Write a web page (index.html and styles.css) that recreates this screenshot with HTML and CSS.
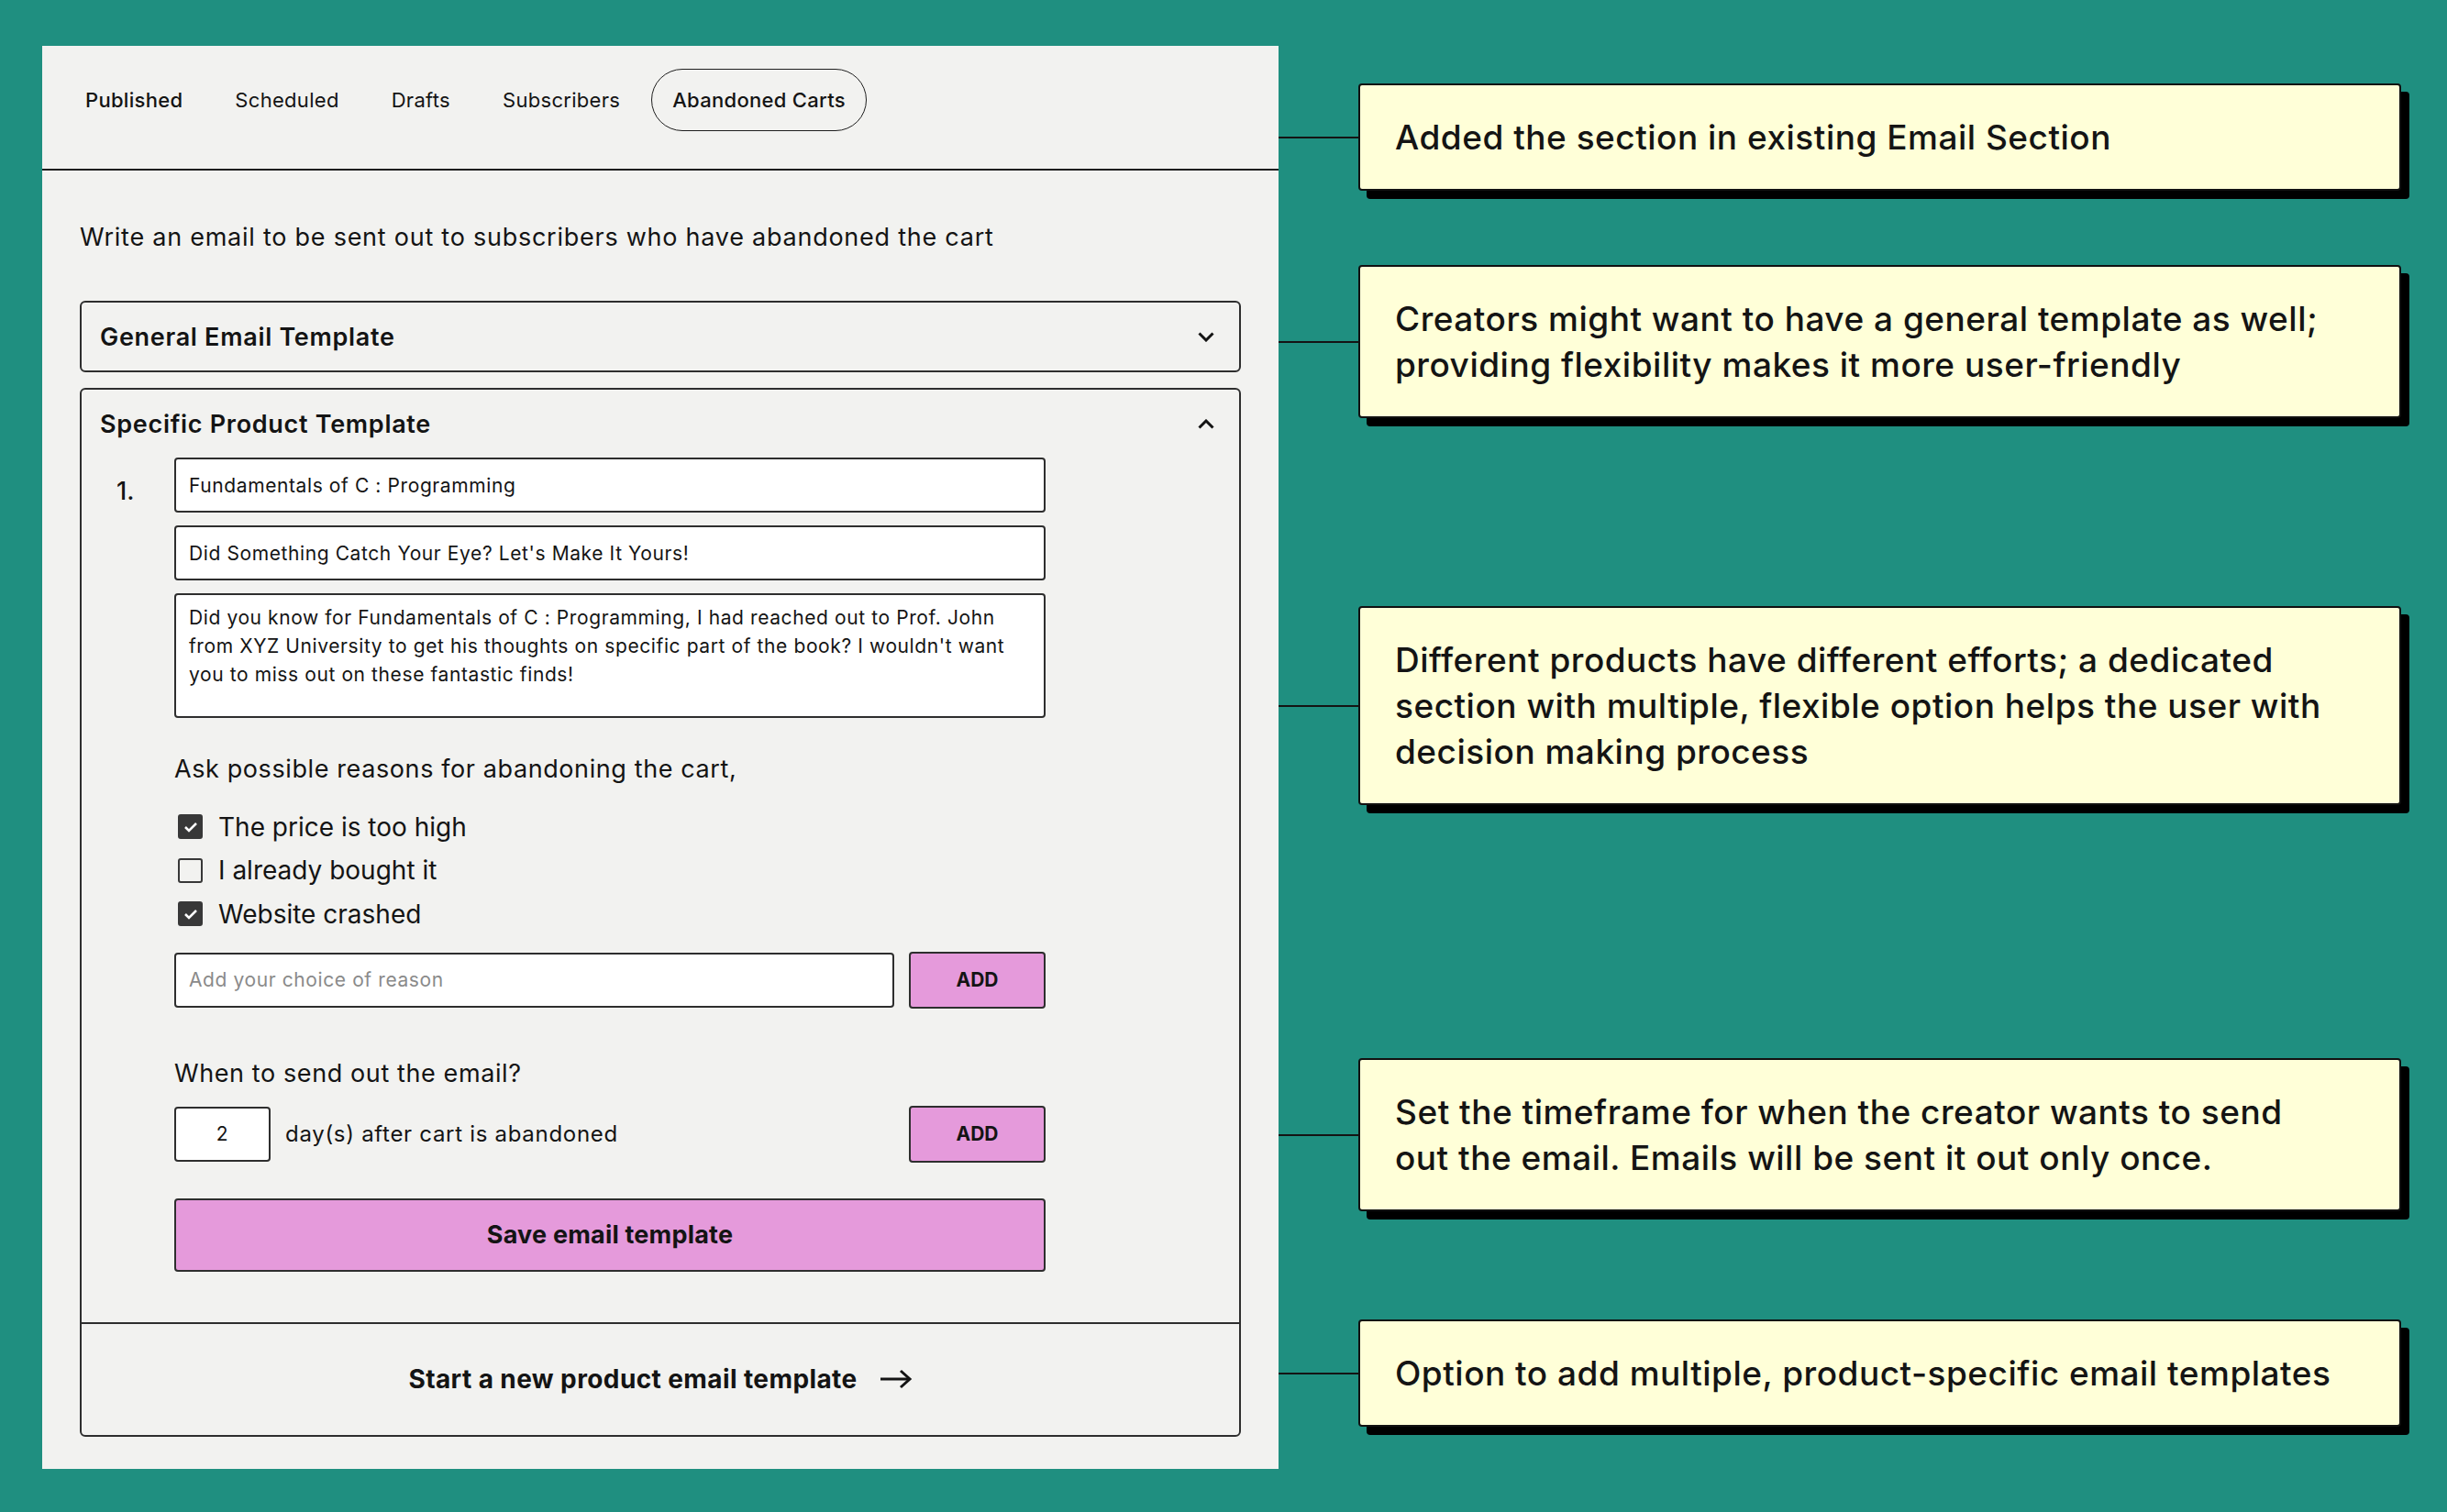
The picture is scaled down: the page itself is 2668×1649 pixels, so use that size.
FILE: index.html
```html
<!DOCTYPE html>
<html lang="en">

<head>
    <meta charset="UTF-8">
    <meta name="viewport" content="width=device-width, initial-scale=1.0">
    <title>Abandoned Carts</title>
    <link rel="stylesheet" href="styles.css">
</head>

<body>
    <div class="page">
        <div class="panel">
            <nav class="tabs">
                <a class="tab tab-first" href="#published">Published</a>
                <a class="tab" href="#scheduled">Scheduled</a>
                <a class="tab" href="#drafts">Drafts</a>
                <a class="tab" href="#subscribers">Subscribers</a>
                <a class="tab active" href="#abandoned">Abandoned Carts</a>
            </nav>
            <div class="panel-body">
                <p class="intro">Write an email to be sent out to subscribers who have abandoned the cart</p>

                <div class="accordion">
                    <div class="accordion-head">
                        <span>General Email Template</span>
                        <svg class="chevron" width="18" height="11" viewBox="0 0 18 11"><polyline points="1.5,1.5 9,9 16.5,1.5" /></svg>
                    </div>
                </div>

                <div class="accordion open">
                    <div class="accordion-head">
                        <span>Specific Product Template</span>
                        <svg class="chevron" width="18" height="11" viewBox="0 0 18 11"><polyline points="1.5,9.5 9,2 16.5,9.5" /></svg>
                    </div>
                    <div class="accordion-content">
                        <div class="item">
                            <span class="item-num">1.</span>
                            <div class="item-form">
                                <input class="field" type="text" value="Fundamentals of C : Programming">
                                <input class="field" type="text" value="Did Something Catch Your Eye? Let's Make It Yours!">
                                <div class="field field-area">Did you know for Fundamentals of C : Programming, I had reached out to Prof. John<br>from XYZ University to get his thoughts on specific part of the book? I wouldn't want<br>you to miss out on these fantastic finds!</div>

                                <p class="label">Ask possible reasons for abandoning the cart,</p>
                                <ul class="checks">
                                    <li><span class="check checked"><svg width="16" height="12" viewBox="0 0 16 12"><polyline points="2,6 6,10 14,2" /></svg></span>The price is too high</li>
                                    <li><span class="check"></span>I already bought it</li>
                                    <li><span class="check checked"><svg width="16" height="12" viewBox="0 0 16 12"><polyline points="2,6 6,10 14,2" /></svg></span>Website crashed</li>
                                </ul>
                                <div class="row">
                                    <input class="field field-grow" type="text" placeholder="Add your choice of reason">
                                    <button class="btn btn-add">ADD</button>
                                </div>

                                <p class="label label-when">When to send out the email?</p>
                                <div class="row">
                                    <input class="field field-days" type="text" value="2">
                                    <span class="days-text">day(s) after cart is abandoned</span>
                                    <button class="btn btn-add">ADD</button>
                                </div>

                                <button class="btn btn-save">Save email template</button>
                            </div>
                        </div>
                    </div>
                    <a class="accordion-foot" href="#new">
                        Start a new product email template
                        <svg class="arrow" width="36" height="22" viewBox="0 0 36 22"><line x1="1" y1="11" x2="33" y2="11" /><polyline points="23,2 33,11 23,20" /></svg>
                    </a>
                </div>
            </div>
        </div>

        <div class="notes">
            <div class="note note-1">
                <div class="note-box">Added the section in existing Email Section</div>
            </div>
            <div class="note note-2">
                <div class="note-box">Creators might want to have a general template as well;<br>providing flexibility makes it more user-friendly</div>
            </div>
            <div class="note note-3">
                <div class="note-box">Different products have different efforts; a dedicated<br>section with multiple, flexible option helps the user with<br>decision making process</div>
            </div>
            <div class="note note-4">
                <div class="note-box">Set the timeframe for when the creator wants to send<br>out the email. Emails will be sent it out only once.</div>
            </div>
            <div class="note note-5">
                <div class="note-box">Option to add multiple, product-specific email templates</div>
            </div>
        </div>
    </div>
</body>

</html>
```

FILE: styles.css
```css
body {
    margin: 0;
    background: #1f8f80;
    font-family: "Inter", "Liberation Sans", sans-serif;
    color: #141414;
}

.page {
    display: flex;
    align-items: flex-start;
    padding: 50px 0 0 46px;
}

/* left panel */

.panel {
    width: 1348px;
    background: #f2f2f0;
}

.tabs {
    display: flex;
    align-items: center;
    gap: 11px;
    padding: 25px 24px 41px;
    border-bottom: 2px solid #1e1e1e;
}

.tab {
    height: 68px;
    box-sizing: border-box;
    display: flex;
    align-items: center;
    padding: 0 22px;
    border: 1.5px solid transparent;
    border-radius: 34px;
    font-size: 22px;
    letter-spacing: 0.3px;
    color: #141414;
    text-decoration: none;
}

.tab-first,
.tab.active {
    font-weight: 500;
}

.tab.active {
    border-color: #1e1e1e;
}

.panel-body {
    padding: 55px 41px 35px;
}

.intro {
    margin: 0 0 51px;
    font-size: 27px;
    letter-spacing: 0.75px;
    line-height: 36px;
}

.accordion {
    border: 2px solid #2e2e2e;
    border-radius: 6px;
}

.accordion+.accordion {
    margin-top: 17px;
}

.accordion-head {
    height: 74px;
    display: flex;
    align-items: center;
    justify-content: space-between;
    padding: 0 27px 0 20px;
    font-size: 27px;
    letter-spacing: 0.7px;
    font-weight: 600;
}

.chevron polyline {
    fill: none;
    stroke: #141414;
    stroke-width: 3;
}

.accordion-content {
    padding: 0 0 55px;
    border-bottom: 2px solid #2e2e2e;
}

.item {
    display: flex;
    align-items: flex-start;
}

.item-num {
    width: 63px;
    padding: 20px 0 0 38px;
    font-size: 27px;
    font-weight: 500;
}

.item-form {
    width: 950px;
    display: flex;
    flex-direction: column;
}

.field {
    box-sizing: border-box;
    height: 60px;
    padding: 0 14px;
    border: 2px solid #2e2e2e;
    border-radius: 4px;
    background: #fff;
    font-family: inherit;
    font-size: 21px;
    letter-spacing: 0.6px;
    color: #141414;
    outline: none;
}

.field+.field {
    margin-top: 14px;
}

.field::placeholder {
    color: #8a8a8a;
}

.field-area {
    height: 136px;
    padding: 9px 14px;
    line-height: 31px;
}

.label {
    margin: 38px 0 0;
    font-size: 27px;
    letter-spacing: 0.6px;
    line-height: 36px;
}

.label-when {
    margin-top: 53px;
}

.checks {
    list-style: none;
    margin: 21px 0 17px;
    padding: 0;
}

.checks li {
    height: 47.5px;
    display: flex;
    align-items: center;
    gap: 17px;
    font-size: 28px;
    padding-left: 4px;
}

.check {
    width: 27px;
    height: 27px;
    box-sizing: border-box;
    border: 2.5px solid #383838;
    border-radius: 3px;
    display: flex;
    align-items: center;
    justify-content: center;
}

.check.checked {
    background: #383838;
}

.check polyline {
    fill: none;
    stroke: #fff;
    stroke-width: 2.5;
}

.row {
    display: flex;
    align-items: center;
    gap: 16px;
}

.field-grow {
    flex: 1;
}

.field-days {
    width: 105px;
    padding: 0;
    text-align: center;
    font-size: 21px;
}

.days-text {
    flex: 1;
    font-size: 24px;
    letter-spacing: 0.7px;
}

.btn {
    box-sizing: border-box;
    border: 2px solid #2e2e2e;
    border-radius: 4px;
    background: #e59adb;
    font-family: inherit;
    color: #141414;
    cursor: pointer;
}

.btn-add {
    width: 149px;
    height: 62px;
    font-size: 21px;
    font-weight: 700;
}

.label-when+.row {
    margin-top: 17px;
}

.btn-save {
    margin-top: 39px;
    height: 80px;
    font-size: 27px;
    font-weight: 700;
    letter-spacing: 0.2px;
}

.accordion-foot {
    height: 121px;
    display: flex;
    align-items: center;
    justify-content: center;
    gap: 24px;
    font-size: 28px;
    letter-spacing: 0.4px;
    font-weight: 700;
    color: #141414;
    text-decoration: none;
}

.arrow line,
.arrow polyline {
    fill: none;
    stroke: #141414;
    stroke-width: 3;
}

/* annotations */

.notes {
    padding-top: 41px;
}

.note {
    display: flex;
    align-items: center;
}

.note::before {
    content: '';
    width: 87px;
    height: 2px;
    background: #141414;
}

.note-box {
    width: 1137px;
    box-sizing: border-box;
    padding: 31.5px 38px;
    border: 2px solid #111;
    border-radius: 4px;
    background: #ffffd8;
    box-shadow: 9px 9px 0 #000;
    font-size: 37px;
    letter-spacing: 0.5px;
    font-weight: 500;
    line-height: 50px;
}

.note-2 {
    margin-top: 81px;
}

.note-3 {
    margin-top: 205px;
}

.note-4 {
    margin-top: 276px;
}

.note-5 {
    margin-top: 118px;
}
```
